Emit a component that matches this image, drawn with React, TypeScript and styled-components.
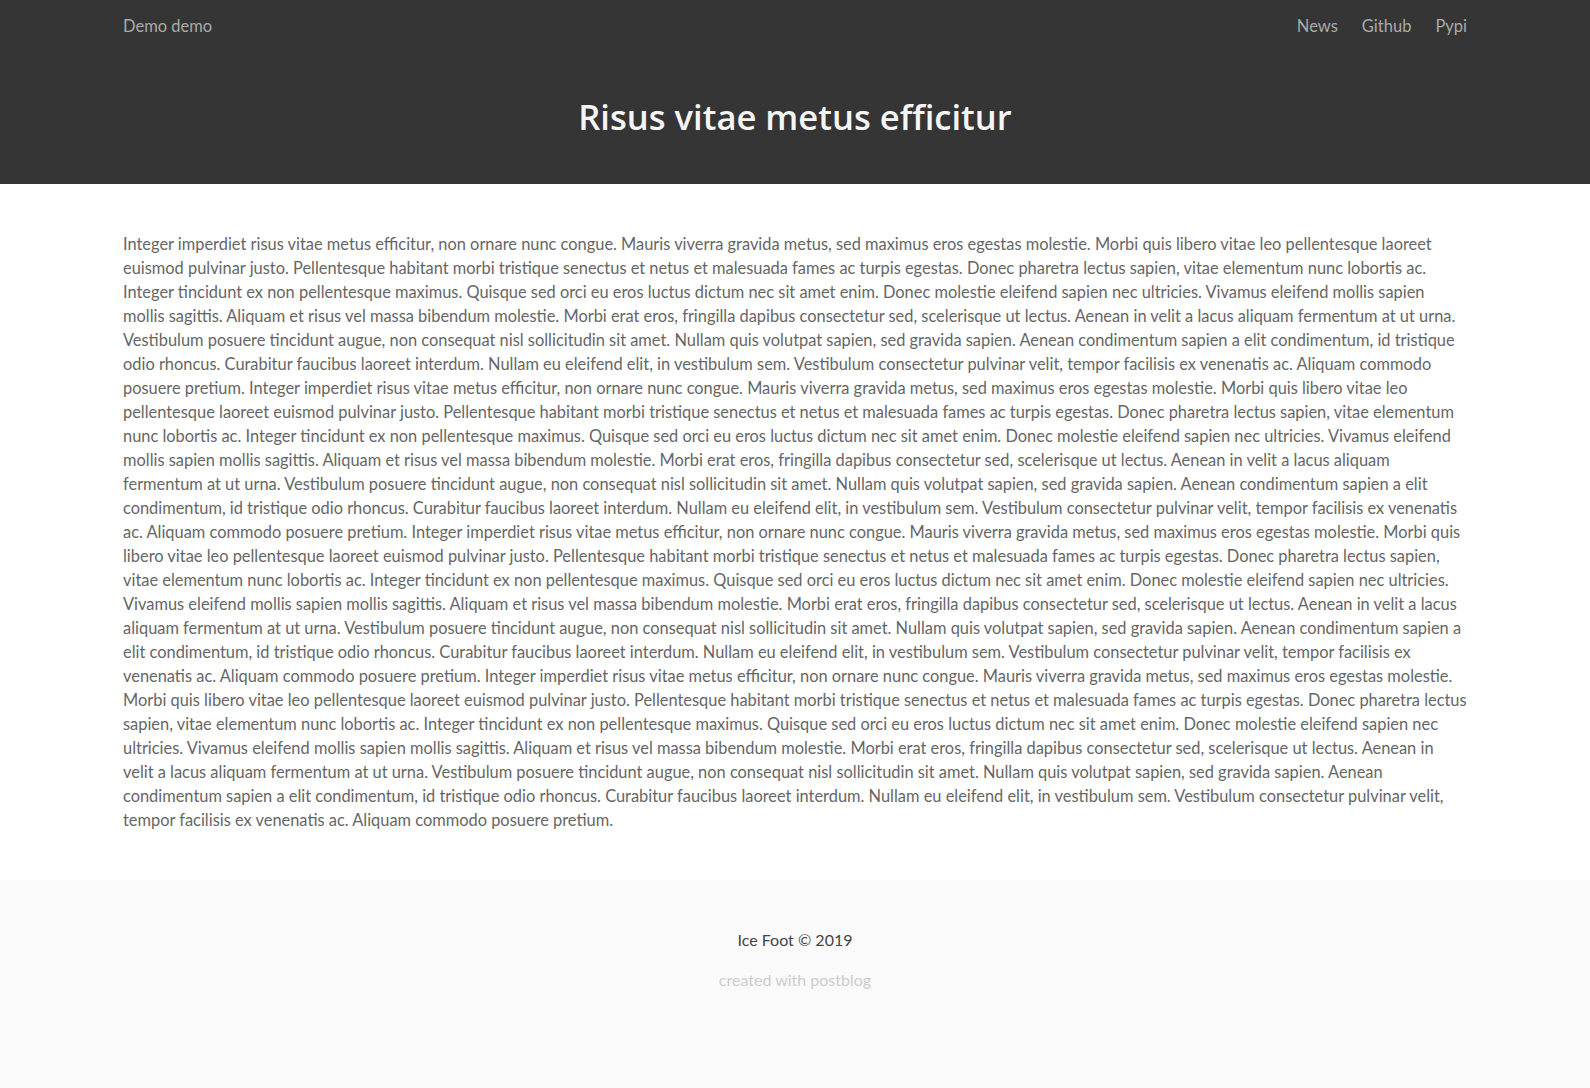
import React from "react";
import styled, { createGlobalStyle } from "styled-components";

const GlobalStyle = createGlobalStyle`
  html, body {
    margin: 0;
    padding: 0;
    background: #ffffff;
  }
  body {
    font-family: Lato, "Open Sans", sans-serif;
    -webkit-font-smoothing: antialiased;
  }
`;

const Header = styled.header`
  background: #353535;
  height: 184px;
  display: flex;
  flex-direction: column;
`;

const Container = styled.div`
  width: 1344px;
  margin: 0 auto;
`;

const NavBar = styled(Container)`
  height: 52px;
  display: flex;
  align-items: center;
  justify-content: space-between;
`;

const Brand = styled.a`
  font-size: 16.5px;
  color: #aaaaaa;
  text-decoration: none;
`;

const NavLinks = styled.nav`
  display: flex;
  gap: 24px;
`;

const NavLink = styled.a`
  font-size: 16.5px;
  color: #aaaaaa;
  text-decoration: none;
`;

const Title = styled.h1`
  margin: 0;
  flex: 1;
  display: flex;
  align-items: center;
  justify-content: center;
  padding-bottom: 4px;
  font-family: "Open Sans", sans-serif;
  font-weight: 600;
  font-size: 34.6px;
  color: #f5f5f5;
`;

const Main = styled(Container)`
  padding: 48px 0 48px;
`;

const Paragraph = styled.p`
  margin: 0;
  font-size: 16.4px;
  line-height: 24px;
  color: #666666;
`;

const Footer = styled.footer`
  background: #fafafa;
  min-height: 208px;
  padding-top: 48px;
  display: flex;
  flex-direction: column;
  align-items: center;
  gap: 16px;
`;

const Copyright = styled.div`
  font-size: 16px;
  line-height: 24px;
  color: #444444;
`;

const Credit = styled.a`
  font-size: 16px;
  line-height: 24px;
  color: #cccccc;
  text-decoration: none;
`;

const block =
  "Integer imperdiet risus vitae metus efficitur, non ornare nunc congue. Mauris viverra gravida metus, sed maximus eros egestas molestie. Morbi quis libero vitae leo pellentesque laoreet euismod pulvinar justo. Pellentesque habitant morbi tristique senectus et netus et malesuada fames ac turpis egestas. Donec pharetra lectus sapien, vitae elementum nunc lobortis ac. Integer tincidunt ex non pellentesque maximus. Quisque sed orci eu eros luctus dictum nec sit amet enim. Donec molestie eleifend sapien nec ultricies. Vivamus eleifend mollis sapien mollis sagittis. Aliquam et risus vel massa bibendum molestie. Morbi erat eros, fringilla dapibus consectetur sed, scelerisque ut lectus. Aenean in velit a lacus aliquam fermentum at ut urna. Vestibulum posuere tincidunt augue, non consequat nisl sollicitudin sit amet. Nullam quis volutpat sapien, sed gravida sapien. Aenean condimentum sapien a elit condimentum, id tristique odio rhoncus. Curabitur faucibus laoreet interdum. Nullam eu eleifend elit, in vestibulum sem. Vestibulum consectetur pulvinar velit, tempor facilisis ex venenatis ac. Aliquam commodo posuere pretium.";

const body = [block, block, block, block].join(" ");

export default function App() {
  return (
    <>
      <GlobalStyle />
      <Header>
        <NavBar>
          <Brand href="#">Demo demo</Brand>
          <NavLinks>
            <NavLink href="#">News</NavLink>
            <NavLink href="#">Github</NavLink>
            <NavLink href="#">Pypi</NavLink>
          </NavLinks>
        </NavBar>
        <Title>Risus vitae metus efficitur</Title>
      </Header>
      <Main>
        <Paragraph>{body}</Paragraph>
      </Main>
      <Footer>
        <Copyright>Ice Foot © 2019</Copyright>
        <Credit href="#">created with postblog</Credit>
      </Footer>
    </>
  );
}
